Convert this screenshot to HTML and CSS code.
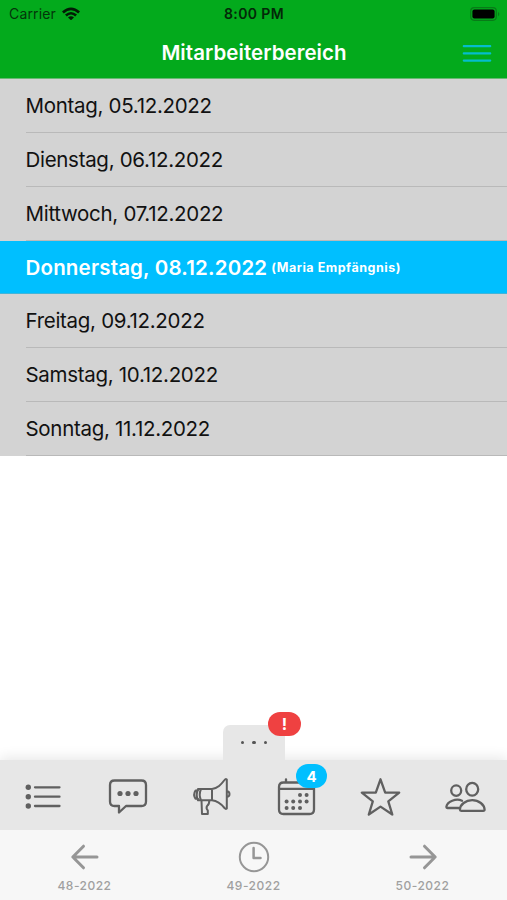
FILE: index.html
```html
<!DOCTYPE html>
<html lang="de">
<head>
<meta charset="utf-8">
<meta name="viewport" content="width=device-width, initial-scale=1">
<title>Mitarbeiterbereich</title>
<link rel="stylesheet" href="styles.css">
</head>
<body>
<div class="app">
  <header class="header">
    <div class="status">
      <div class="carrier"><span class="carrier-name">Carrier</span>
        <svg class="wifi" viewBox="0 0 18 13"><path d="M0 4.5Q9-3.5 18 4.5L16.2 6.4Q9 .2 1.8 6.4Z"/><path d="M3 7.6Q9 2.4 15 7.6L13.2 9.4Q9 5.8 4.8 9.4Z"/><path d="M6 10.5Q9 8.2 12 10.5L9 13.3Z"/></svg>
      </div>
      <span class="time">8:00 PM</span>
      <svg class="battery" viewBox="0 0 31 14"><rect x=".7" y=".7" width="25.6" height="12.6" rx="3.5" fill="none" stroke="#087b18" stroke-width="1.2"/><rect x="2.4" y="2.5" width="22.2" height="9" rx="2"/><path d="M28 4.7Q30.6 7 28 9.3Z" fill="#087b18"/></svg>
    </div>
    <div class="navbar">
      <h1 class="title">Mitarbeiterbereich</h1>
      <svg class="burger" viewBox="0 0 28 19"><path d="M.8 2.2H27.2M.8 9.4H27.2M.8 16.6H27.2"/></svg>
    </div>
  </header>
  <main class="days">
    <div class="day"><span class="label">Montag, 05.12.2022</span></div>
    <div class="day"><span class="label">Dienstag, 06.12.2022</span></div>
    <div class="day"><span class="label">Mittwoch, 07.12.2022</span></div>
    <div class="day today"><span class="label">Donnerstag, 08.12.2022</span><span class="holiday">(Maria Empfängnis)</span></div>
    <div class="day"><span class="label">Freitag, 09.12.2022</span></div>
    <div class="day"><span class="label">Samstag, 10.12.2022</span></div>
    <div class="day"><span class="label">Sonntag, 11.12.2022</span></div>
  </main>
  <footer class="footer">
    <div class="handle"><i></i><i></i><i></i><span class="badge alert">!</span></div>
    <nav class="tools">
      <svg class="tool" viewBox="0 0 84.5 70"><path d="M35 27.3H59.5M35 36.7H59.5M35 46H59.5"/><g class="dots"><circle cx="28.3" cy="27.3" r="2.7"/><circle cx="28.3" cy="36.7" r="2.7"/><circle cx="28.3" cy="46" r="2.7"/></g></svg>
      <svg class="tool" viewBox="0 0 84.5 70"><path d="M29.5 20.5H56.5Q61 20.5 61 25V41.5Q61 46 56.5 46H41L34 52.5V46H29.5Q25 46 25 41.5V25Q25 20.5 29.5 20.5Z"/><g class="dots"><circle cx="35" cy="33.5" r="2.6"/><circle cx="43" cy="33.5" r="2.6"/><circle cx="51" cy="33.5" r="2.6"/></g></svg>
      <svg class="tool thin" viewBox="0 0 84.5 70"><path d="M29 29H43V40.3H29Q26.5 34.6 29 29ZM29 30.5H26.5Q23.8 34.5 26.5 38.8H29M32 29Q29.5 34.6 32 40.3M43 29C49 28.5 52 24.5 55.5 20Q56.5 18.5 57.8 19.5V48.5Q56.5 49.5 55.5 48C52 43.7 49 41 43 40.3M57.8 31.3Q60.5 31.3 60.5 34.1T57.8 37M32.5 40.3L33 54H38.8V50.5Q36.8 48.5 38 46Q40.5 44.5 40.3 40.3"/></svg>
      <div class="tool-slot">
        <svg class="tool" viewBox="0 0 84.5 70"><path d="M29.5 22.5H55.5Q60 22.5 60 27V49.5Q60 54 55.5 54H29.5Q25 54 25 49.5V27Q25 22.5 29.5 22.5ZM25 28.8H60M32 19.3V22M53 19.3V22"/><g class="dots"><circle cx="46" cy="35" r="2"/><circle cx="52.6" cy="35" r="2"/><circle cx="32.6" cy="41.5" r="2"/><circle cx="39.2" cy="41.5" r="2"/><circle cx="46" cy="41.5" r="2"/><circle cx="52.6" cy="41.5" r="2"/><circle cx="32.6" cy="48" r="2"/><circle cx="39.2" cy="48" r="2"/><circle cx="46" cy="48" r="2"/></g></svg>
        <span class="badge count">4</span>
      </div>
      <svg class="tool" viewBox="0 0 84.5 70"><path d="M42.5 19.3L47.2 32.6H61.2L50.3 41.3L54.3 54.5L42.5 46.6L30.8 54.5L34.8 41.3L23.8 32.6H37.8Z"/></svg>
      <svg class="tool" viewBox="0 0 84.5 70"><ellipse cx="33.2" cy="30.6" rx="5" ry="5.2"/><ellipse cx="49.2" cy="29.2" rx="6" ry="6.4"/><path d="M49.2 40.2C42.5 40.2 37.2 44.5 36.9 49.5Q36.9 50.8 38.2 50.8H60.2Q61.6 50.8 61.6 49.5C61.2 44.5 56 40.2 49.2 40.2ZM39 40.7C33 38 24.2 41.5 23.4 46.7Q23.3 48 24.6 48H35.5"/></svg>
    </nav>
    <nav class="weeks">
      <div class="week"><svg class="week-icon" viewBox="0 0 32 32"><path class="arrow" d="M28 16H4M14.5 5.2L3.8 16L14.5 26.8"/></svg><span>48-2022</span></div>
      <div class="week"><svg class="week-icon" viewBox="0 0 32 32"><circle cx="16" cy="16" r="14.2"/><path class="hands" d="M15.6 7V17H22.5"/></svg><span>49-2022</span></div>
      <div class="week"><svg class="week-icon" viewBox="0 0 32 32"><path class="arrow" d="M4 16H28M17.5 5.2L28.2 16L17.5 26.8"/></svg><span>50-2022</span></div>
    </nav>
  </footer>
</div>
</body>
</html>
```
FILE: styles.css
```css
* { box-sizing: border-box; }
body { margin: 0; font-family: Inter, "Liberation Sans", sans-serif; background: #fff; color: #111; }
.app { height: 900px; display: flex; flex-direction: column; overflow: hidden; }
.header { height: 79.4px; flex: none; background: #03aa1c; border-bottom: 1px solid #69b973; }
.status { height: 27px; display: grid; grid-template-columns: 1fr auto 1fr; align-items: center; padding: 0 6px 0 9px; color: #04350a; }
.carrier { display: flex; align-items: center; gap: 6px; font-size: 14px; letter-spacing: .15px; }
.carrier-name { line-height: 20px; }
.wifi { width: 18px; height: 13px; fill: #021c05; }
.time { font-size: 14px; font-weight: 600; letter-spacing: .4px; margin-right: 2px; color: #032808; }
.battery { width: 31px; height: 14px; justify-self: end; }
.navbar { height: 51px; display: grid; grid-template-columns: 1fr auto 1fr; align-items: center; padding: 0 16px; }
.title { grid-column: 2; margin: 0 -1px 0 0; font-size: 20.5px; font-weight: 600; line-height: 26px; letter-spacing: .05px; color: #fff; }
.burger { justify-self: end; width: 28px; height: 19px; margin-top: 1px; fill: none; stroke: #05bdcc; stroke-width: 2.2; stroke-linecap: round; overflow: visible; }
.days { flex: none; background: #d3d3d3; }
.day { height: 53.75px; margin-left: 25.5px; border-bottom: 1px solid #b9b9b9; display: flex; align-items: center; font-size: 20.5px; letter-spacing: -.3px; white-space: nowrap; }
.today { margin-left: 0; padding-left: 25.5px; background: #00bfff; border-color: #42b5d9; color: #fff; font-weight: 600; letter-spacing: .18px; }
.holiday { margin-left: 4px; font-size: 12.5px; font-weight: 700; letter-spacing: .53px; }
.footer { margin-top: auto; }
.handle { position: relative; width: 62px; height: 35.5px; margin: 0 auto; padding-top: 16px; display: flex; justify-content: center; gap: 8px; background: #e7e7e7; border-radius: 7px 7px 0 0; left: .5px; }
.handle i { width: 3.2px; height: 3.2px; border-radius: 50%; background: #555; }
.badge { position: absolute; display: grid; place-items: center; color: #fff; font-weight: 700; border-radius: 12px; }
.alert { left: 45px; top: -12.5px; width: 33px; height: 23.5px; background: #ef4141; font-size: 16px; }
.count { left: 42.5px; top: 4.4px; width: 31px; height: 23.5px; background: #00bfff; font-size: 15px; }
.tools { height: 70px; display: grid; grid-template-columns: repeat(6, 1fr); background: #e7e7e7; box-shadow: 0 -3px 12px rgba(0,0,0,.09); }
.tool-slot { position: relative; }
.tool { width: 84.5px; height: 70px; display: block; fill: none; stroke: #606060; stroke-width: 2.3; stroke-linecap: round; stroke-linejoin: round; }
.thin { stroke-width: 2; }
.dots { fill: #606060; stroke: none; }
.weeks { height: 70px; display: grid; grid-template-columns: repeat(3, 1fr); background: #f7f7f7; }
.week { display: flex; flex-direction: column; align-items: center; padding-top: 10.5px; gap: 5px; font-size: 12px; font-weight: 500; line-height: 16px; letter-spacing: .5px; color: #a0a0a0; }
.week-icon { width: 32px; height: 32px; fill: none; stroke: #969696; stroke-width: 2; stroke-linecap: round; stroke-linejoin: round; }
.arrow { stroke-width: 3; }
.hands { stroke-width: 2.5; }
```
